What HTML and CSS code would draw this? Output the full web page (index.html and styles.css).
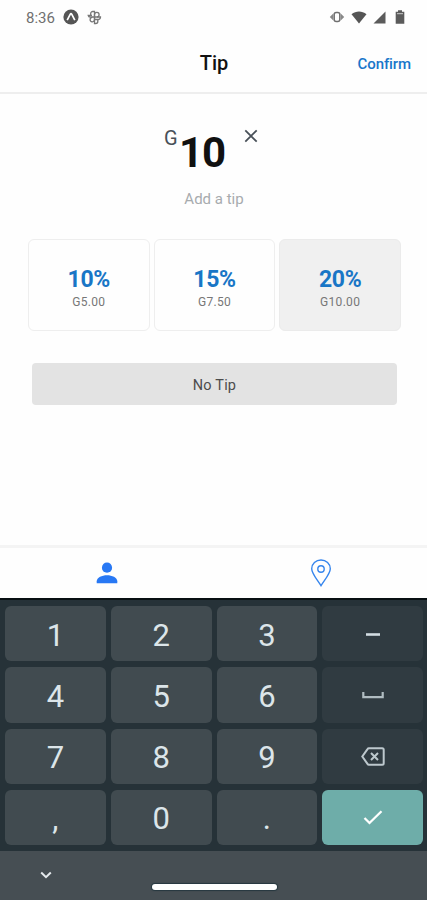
FILE: index.html
```html
<!DOCTYPE html>
<html lang="en">
<head>
<meta charset="utf-8">
<title>Tip</title>
<link rel="stylesheet" href="styles.css">
</head>
<body>
<div class="phone">
  <div class="status">
    <span class="clock">8:36</span>
    <svg class="app" width="16" height="16" viewBox="0 0 16 16"><circle cx="8" cy="8" r="7.6" fill="#555"/><path d="M4.200 11.200 7.300 5.200Q8 4.200 8.700 5.200l3.100 6" fill="none" stroke="#fff" stroke-width="1.700"/></svg>
    <svg class="fan" width="15" height="15" viewBox="0 0 15 15" fill="none" stroke="#777" stroke-width="1.300"><path d="M7.500 7V1.500H5.700a2 2 0 0 0-2 2V5"/><path d="M7.500 7V4.500a2.300 2.300 0 1 1 2.300 2.500H3.200a2 2 0 0 1-2-1.700H5"/><path d="M7.500 7v6.500h1.300a2 2 0 0 0 2-2V10"/><path d="M7.500 7v2.800a2.200 2.200 0 1 1-2.200-2.400M10 7h3.500a2.400 2.400 0 0 1-2.400 2.500H7.500"/></svg>
    <div class="system">
      <svg width="16" height="14" viewBox="0 0 16 14"><path d="M4.300 3.500.8 7l3.500 3.500zM11.700 3.500 15.200 7l-3.500 3.500z" fill="#888"/><rect x="5.200" y="2.400" width="5.600" height="9.200" rx="2" fill="#fff" stroke="#707070" stroke-width="1.500"/></svg>
      <svg width="16" height="13" viewBox="0 0 16 13"><path d="M.5 3.200C5-.3 11-.3 15.500 3.200L8 12.500z" fill="#555"/></svg>
      <svg width="13" height="13" viewBox="0 0 13 13"><path d="M12.500.5v12H.5z" fill="#5b5b5b"/></svg>
      <svg width="10" height="14" viewBox="0 0 10 14"><path d="M3 .3h4v1.500h2.300v12H.7v-12H3z" fill="#5b5b5b"/><path d="M2 3.700h6" stroke="#ccc"/></svg>
    </div>
  </div>
  <header class="header">
    <h1 class="title">Tip</h1>
    <span class="confirm">Confirm</span>
  </header>
  <main class="main">
    <div class="amount">
      <span class="currency">G</span>
      <span class="value">10</span>
      <svg class="clear" width="14" height="14" viewBox="0 0 14 14"><path d="m1.300 1.300 11.400 11.400M12.700 1.300 1.300 12.700" stroke="#485058" stroke-width="1.800"/></svg>
    </div>
    <div class="hint">Add a tip</div>
    <div class="options">
      <div class="option"><b class="percent">10%</b><span class="price">G5.00</span></div>
      <div class="option"><b class="percent">15%</b><span class="price">G7.50</span></div>
      <div class="option selected"><b class="percent">20%</b><span class="price">G10.00</span></div>
    </div>
    <div class="no-tip">No Tip</div>
  </main>
  <nav class="tabs">
    <div class="tab"><svg width="22" height="22" viewBox="0 0 22 22" fill="#2878f4"><circle cx="11" cy="5.700" r="5.100"/><path d="M.7 21.300v-2C.7 15.500 6 13.300 11 13.300s10.300 2.200 10.300 6v2z"/></svg></div>
    <div class="tab"><svg width="22" height="28" viewBox="0 0 22 28" fill="none" stroke="#3585ed" stroke-width="1.400"><path d="M11 26.700C7.500 21 1.700 14.500 1.700 9.700a9.300 8.700 0 0 1 18.600 0c0 4.800-5.800 11.300-9.300 17z"/><circle cx="11" cy="10" r="3.200"/></svg></div>
  </nav>
  <div class="keyboard">
    <div class="key">1</div><div class="key">2</div><div class="key">3</div>
    <div class="key side"><svg width="14" height="4" viewBox="0 0 14 4"><path d="M0 2.500h14" stroke="#d3dde2" stroke-width="2.600"/></svg></div>
    <div class="key">4</div><div class="key">5</div><div class="key">6</div>
    <div class="key side"><svg width="22" height="8" viewBox="0 0 22 8"><path d="M1.300 1v5.200h19.400V1" fill="none" stroke="#b0bcc1" stroke-width="2.200"/></svg></div>
    <div class="key">7</div><div class="key">8</div><div class="key">9</div>
    <div class="key side"><svg width="24" height="19" viewBox="0 0 24 19" fill="none" stroke="#bdc8cd" stroke-width="2"><path d="M7.800 1.300h13.400q1.500 0 1.500 1.500v13.400q0 1.500-1.500 1.500H7.800q-.8 0-1.300-.8L1.300 9.500l5.200-7.400q.5-.8 1.300-.8z"/><path d="m10 6 7 7M17 6l-7 7"/></svg></div>
    <div class="key">,</div><div class="key">0</div><div class="key">.</div>
    <div class="key done"><svg width="20" height="15" viewBox="0 0 20 15"><path d="m1.500 8 5 5L18.500 1.300" fill="none" stroke="#fff" stroke-width="2.300"/></svg></div>
  </div>
  <div class="system-nav">
    <svg class="chevron" width="12" height="8" viewBox="0 0 12 8"><path d="m1.200 1.500 4.800 4.700 4.800-4.700" fill="none" stroke="#e5eaed" stroke-width="2"/></svg>
    <div class="handle"></div>
  </div>
</div>
</body>
</html>
```
FILE: styles.css
```css
* { box-sizing: border-box; }
body { margin: 0; background: #fff; font-family: Roboto, "Liberation Sans", sans-serif; }
svg { display: block; flex: none; }
.phone { width: 427px; height: 900px; display: flex; flex-direction: column; overflow: hidden; background: #fefefe; }
.status { height: 34px; flex: none; display: flex; align-items: center; padding: 0 22px 0 26px; }
.clock { width: 37px; font-size: 15px; line-height: 18px; padding-top: 1px; color: #707070; }
.fan { margin-left: 8px; }
.system { margin-left: auto; display: flex; align-items: center; gap: 6px; }
.system svg:last-child { margin-left: 3px; }
.header { height: 60px; flex: none; display: grid; grid-template-columns: 1fr auto 1fr; align-items: center; padding: 0 16px; border-bottom: 2px solid #eee; }
.title { grid-column: 2; margin: 0; font-size: 20px; font-weight: 500; color: #111; padding-left: 1px; }
.confirm { justify-self: end; padding-top: 1px; font-size: 15px; font-weight: 500; color: #1976ca; letter-spacing: -.1px; }
.main { flex: 1; padding: 34px 28px 0; }
.amount { display: flex; align-items: flex-start; height: 51px; padding-left: 136px; }
.currency { font-size: 20px; line-height: 20px; color: #485058; width: 15px; }
.value { font-size: 42px; line-height: 50px; font-weight: 700; color: #111; width: 47px; margin-right: 18px; letter-spacing: -1px; }
.clear { margin-top: 1px; }
.hint { margin-top: 11px; padding-left: 1px; text-align: center; font-size: 15px; line-height: 18px; color: #a7abae; letter-spacing: 0; }
.options { margin-top: 31px; display: grid; grid-template-columns: repeat(3, 1fr); gap: 4px; width: 373px; }
.option { height: 92px; border: 1.500px solid #eee; border-radius: 6px; display: flex; flex-direction: column; align-items: center; padding-top: 26px; }
.selected { background: #f0f0f0; border-color: #ebebeb; }
.percent { font-size: 23px; line-height: 27px; font-weight: 700; color: #1976c6; letter-spacing: -.3px; }
.price { margin-top: 1px; font-size: 12px; line-height: 17px; color: #777; letter-spacing: .3px; }
.no-tip { margin: 32px 2px 0 4px; height: 42px; padding-top: 2px; display: flex; align-items: center; justify-content: center; background: #e3e3e3; border-radius: 4px; font-size: 14.500px; color: #4c4c4c; letter-spacing: .2px; }
.tabs { height: 53px; flex: none; display: grid; grid-template-columns: 1fr 1fr; border-top: 3px solid #f4f4f4; }
.tab { display: flex; align-items: center; justify-content: center; }
.tab:last-child { padding-left: 1px; }
.keyboard { height: 253px; flex: none; background: #263238; border-top: 2px solid #080f12; display: grid; grid-template-columns: repeat(4, 1fr); grid-template-rows: repeat(4, 1fr); gap: 6px 5px; padding: 6px 4px 6px 5px; }
.key { display: flex; align-items: center; justify-content: center; border-radius: 6px; background: #414b50; color: #dce5e9; font-size: 31px; line-height: 36px; padding-top: 4px; }
.side { background: #303b41; padding: 0; }
.done { background: #6eada9; padding: 0; }
.system-nav { height: 49px; flex: none; background: #464e53; display: grid; grid-template-columns: 1fr auto 1fr; }
.chevron { margin: 20px 0 0 40px; }
.handle { grid-column: 2; margin: 33px 0 0 1px; width: 125px; height: 6px; border-radius: 3px; background: #fff; box-shadow: 0 0 1px 1px #263840; }
```
